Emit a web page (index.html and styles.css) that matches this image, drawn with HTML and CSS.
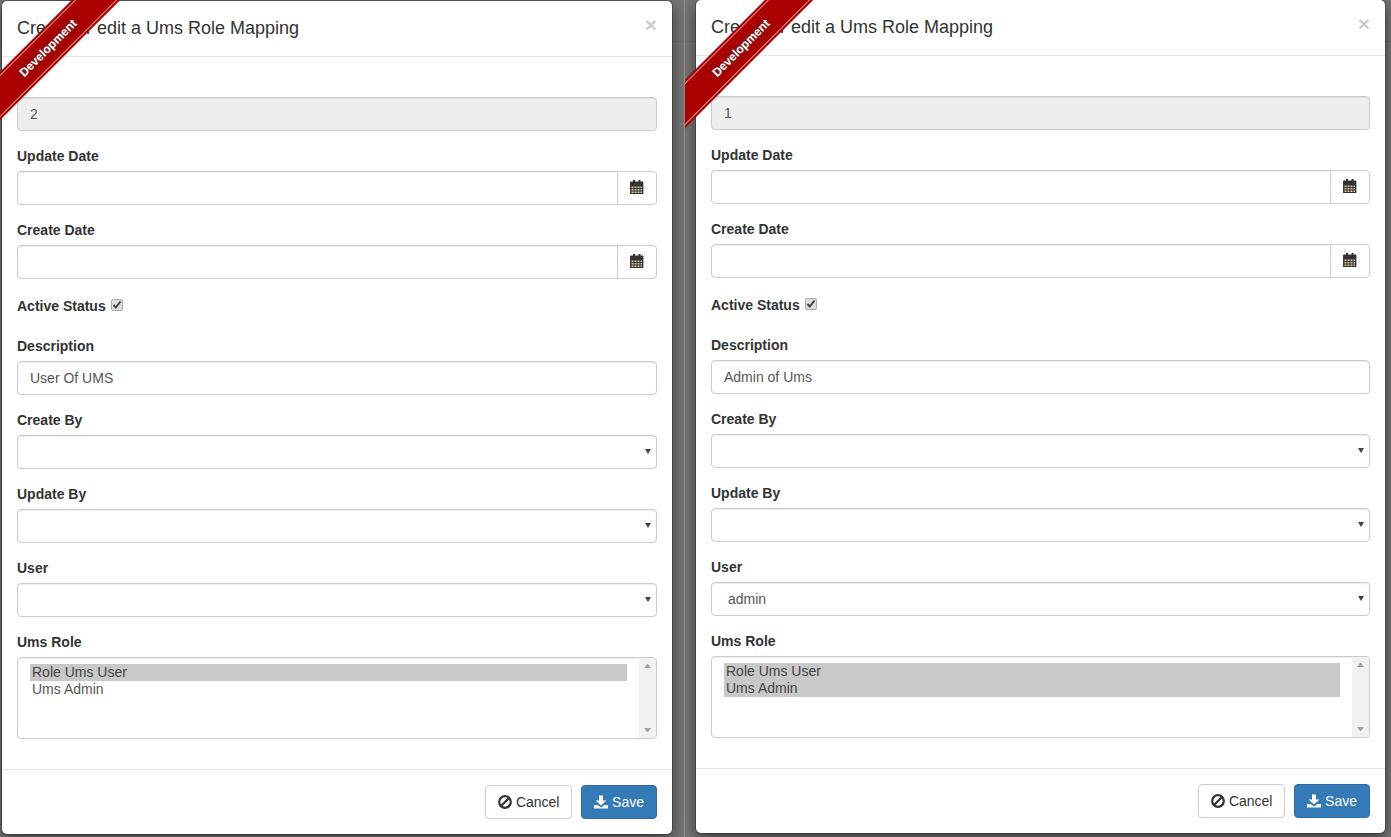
FILE: index.html
```html
<!DOCTYPE html>
<html lang="en">

<head>
    <meta charset="utf-8">
    <meta name="viewport" content="width=device-width, initial-scale=1">
    <title>Ums Role Mapping</title>
    <link rel="stylesheet" href="styles.css">
</head>

<body>
    <!-- Icons used by both windows -->
    <svg class="icon-defs" aria-hidden="true">
        <symbol id="icon-calendar" viewBox="0 0 14 14">
            <path fill="#d8cc9a" d="M1 6h12v7H1z"/>
            <path fill="#8c2b33" d="M0 2h1v12H0z"/>
            <path fill="#2a78bd" d="M12.500 2h1v12h-1z"/>
            <path d="M3 0h2v2H3zM8.500 0h2v2h-2z"/>
            <path fill-rule="evenodd" d="M.5 1.500h12.500V14H.5zM1.500 6.500v1.500h2V6.500zM4.500 6.500v1.500h2V6.500zM7.500 6.500v1.500h2V6.500zM10.500 6.500v1.500h1.500V6.500zM1.500 9v1.500h2V9zM4.500 9v1.500h2V9zM7.500 9v1.500h2V9zM10.500 9v1.500h1.500V9zM1.500 11.500V13h2v-1.500zM4.500 11.500V13h2v-1.500zM7.500 11.500V13h2v-1.500zM10.500 11.500V13h1.500v-1.500z"/>
        </symbol>
        <symbol id="icon-ban" viewBox="0 0 14 14">
            <circle cx="7" cy="7" r="5.800" fill="none" stroke="currentColor" stroke-width="2.200"/>
            <path d="M3 11l8-8" stroke="currentColor" stroke-width="2.200"/>
        </symbol>
        <symbol id="icon-save" viewBox="0 0 14 14">
            <path d="M5 .5h4v5h3.500L7 10.500 1.500 5.500H5z"/>
            <path d="M0 10h3.500L7 12.500 10.500 10H14v3.500H0z"/>
        </symbol>
    </svg>

    <!-- Left window -->
    <div class="pane pane-left">
        <div class="ribbon"><span>Development</span></div>
        <div class="modal">
            <div class="modal-header">
                <h4 class="modal-title">Create or edit a Ums Role Mapping</h4>
                <span class="close">&times;</span>
            </div>
            <form class="modal-body">
                <div class="form-group">
                    <label>ID</label>
                    <input class="form-control" type="text" value="2" disabled>
                </div>
                <div class="form-group">
                    <label>Update Date</label>
                    <div class="input-group">
                        <input class="form-control" type="text">
                        <span class="addon"><svg class="icon"><use href="#icon-calendar"/></svg></span>
                    </div>
                </div>
                <div class="form-group">
                    <label>Create Date</label>
                    <div class="input-group">
                        <input class="form-control" type="text">
                        <span class="addon"><svg class="icon"><use href="#icon-calendar"/></svg></span>
                    </div>
                </div>
                <div class="form-group check-group">
                    <label>Active Status</label>
                    <span class="checkbox"><svg viewBox="0 0 10 10"><path d="M1.500 5l2.300 2.500L8.500 1.500" fill="none" stroke="#444" stroke-width="2"/></svg></span>
                </div>
                <div class="form-group">
                    <label>Description</label>
                    <input class="form-control" type="text" value="User Of UMS">
                </div>
                <div class="form-group">
                    <label>Create By</label>
                    <div class="select-box"><select class="form-control"><option></option></select></div>
                </div>
                <div class="form-group">
                    <label>Update By</label>
                    <div class="select-box"><select class="form-control"><option></option></select></div>
                </div>
                <div class="form-group">
                    <label>User</label>
                    <div class="select-box"><select class="form-control"><option></option></select></div>
                </div>
                <div class="form-group">
                    <label>Ums Role</label>
                    <div class="list-box">
                        <select class="form-control listbox" multiple>
                            <option selected>Role Ums User</option>
                            <option>Ums Admin</option>
                        </select>
                        <div class="scrollbar"><i class="arrow-up"></i><i class="arrow-down"></i></div>
                    </div>
                </div>
            </form>
            <div class="modal-footer">
                <button class="btn" type="button"><svg class="icon"><use href="#icon-ban"/></svg>Cancel</button>
                <button class="btn btn-primary" type="button"><svg class="icon"><use href="#icon-save"/></svg>Save</button>
            </div>
        </div>
    </div>

    <!-- Right window -->
    <div class="pane pane-right">
        <div class="ribbon"><span>Development</span></div>
        <div class="modal">
            <div class="modal-header">
                <h4 class="modal-title">Create or edit a Ums Role Mapping</h4>
                <span class="close">&times;</span>
            </div>
            <form class="modal-body">
                <div class="form-group">
                    <label>ID</label>
                    <input class="form-control" type="text" value="1" disabled>
                </div>
                <div class="form-group">
                    <label>Update Date</label>
                    <div class="input-group">
                        <input class="form-control" type="text">
                        <span class="addon"><svg class="icon"><use href="#icon-calendar"/></svg></span>
                    </div>
                </div>
                <div class="form-group">
                    <label>Create Date</label>
                    <div class="input-group">
                        <input class="form-control" type="text">
                        <span class="addon"><svg class="icon"><use href="#icon-calendar"/></svg></span>
                    </div>
                </div>
                <div class="form-group check-group">
                    <label>Active Status</label>
                    <span class="checkbox"><svg viewBox="0 0 10 10"><path d="M1.500 5l2.300 2.500L8.500 1.500" fill="none" stroke="#444" stroke-width="2"/></svg></span>
                </div>
                <div class="form-group">
                    <label>Description</label>
                    <input class="form-control" type="text" value="Admin of Ums">
                </div>
                <div class="form-group">
                    <label>Create By</label>
                    <div class="select-box"><select class="form-control"><option></option></select></div>
                </div>
                <div class="form-group">
                    <label>Update By</label>
                    <div class="select-box"><select class="form-control"><option></option></select></div>
                </div>
                <div class="form-group">
                    <label>User</label>
                    <div class="select-box"><select class="form-control"><option>admin</option></select></div>
                </div>
                <div class="form-group">
                    <label>Ums Role</label>
                    <div class="list-box">
                        <select class="form-control listbox" multiple>
                            <option selected>Role Ums User</option>
                            <option selected>Ums Admin</option>
                        </select>
                        <div class="scrollbar"><i class="arrow-up"></i><i class="arrow-down"></i></div>
                    </div>
                </div>
            </form>
            <div class="modal-footer">
                <button class="btn" type="button"><svg class="icon"><use href="#icon-ban"/></svg>Cancel</button>
                <button class="btn btn-primary" type="button"><svg class="icon"><use href="#icon-save"/></svg>Save</button>
            </div>
        </div>
    </div>
</body>

</html>
```

FILE: styles.css
```css
* {
    box-sizing: border-box;
}

body {
    margin: 0;
    height: 837px;
    overflow: hidden;
    display: flex;
    background: linear-gradient(#6e6e6e, #6e6e6e) no-repeat 0 41px / 100% 1px, #777;
    font-family: "Liberation Sans", Arial, sans-serif;
    font-size: 14px;
    line-height: 20px;
    color: #333;
}

.icon-defs {
    display: none;
}

.pane {
    position: relative;
    height: 837px;
    overflow: hidden;
}

.pane-left {
    width: 684px;
    padding-left: 1px;
}

.pane-right {
    flex: 1;
    border-left: 1px solid #8c8c8c;
    padding-left: 10px;
}

.pane-right .modal {
    width: 691px;
    margin-top: -1px;
}

/* Corner ribbon, lies over the header */
.ribbon {
    position: absolute;
    top: 31px;
    left: -72px;
    width: 240px;
    height: 34px;
    padding: 2px 0;
    background: #a00;
    transform: rotate(-45deg);
    z-index: 10;
    box-shadow: 0 0 2px rgba(0, 0, 0, 0.3);
}

.pane-right .ribbon {
    left: -64px;
}

.ribbon span {
    display: block;
    height: 30px;
    border-top: 1px solid rgba(255, 255, 255, 0.55);
    border-bottom: 1px solid rgba(255, 255, 255, 0.55);
    font-size: 12px;
    font-weight: 700;
    line-height: 28px;
    text-align: center;
    color: #fff;
    text-shadow: 0 0 5px #444;
}

.modal {
    width: 672px;
    background: #fff;
    border: 1px solid rgba(0, 0, 0, 0.2);
    border-radius: 6px;
    background-clip: padding-box;
    box-shadow: 0 5px 15px rgba(0, 0, 0, 0.5);
}

.modal-header {
    display: flex;
    justify-content: space-between;
    align-items: flex-start;
    padding: 15px;
    border-bottom: 1px solid #e5e5e5;
}

.modal-title {
    margin: 0;
    font-size: 18px;
    font-weight: 500;
    line-height: 25px;
}

.close {
    margin-top: -2px;
    font-size: 21px;
    font-weight: 700;
    line-height: 21px;
    color: #000;
    opacity: 0.2;
    text-shadow: 0 1px 0 #fff;
}

.modal-body {
    display: block;
    padding: 15px;
}

.form-group {
    margin-bottom: 15px;
}

label {
    display: block;
    margin-bottom: 5px;
    font-weight: 700;
}

.form-control {
    display: block;
    width: 100%;
    height: 34px;
    padding: 6px 12px;
    font-family: inherit;
    font-size: 14px;
    line-height: 20px;
    color: #555;
    background: #fff;
    border: 1px solid #ccc;
    border-radius: 4px;
    box-shadow: inset 0 1px 1px rgba(0, 0, 0, 0.075);
}

.form-control:disabled {
    background: #eee;
    opacity: 1;
}

/* Native arrow replaced, the small triangle sits over the select */
.select-box {
    position: relative;
}

.select-box select {
    appearance: none;
    padding-left: 16px;
}

.select-box::after {
    content: "";
    position: absolute;
    top: 14px;
    right: 6.500px;
    border-top: 5px solid #444;
    border-left: 3.500px solid transparent;
    border-right: 3.500px solid transparent;
}

.list-box {
    position: relative;
}

.listbox {
    height: 82px;
    padding-right: 29px;
    overflow: hidden;
}

.listbox option:checked {
    background: linear-gradient(#c8c8c8, #c8c8c8);
    -webkit-text-fill-color: #444;
}

.scrollbar {
    position: absolute;
    top: 1px;
    right: 1px;
    bottom: 1px;
    width: 17px;
    padding: 6px 5px;
    display: flex;
    flex-direction: column;
    justify-content: space-between;
    background: #f1f1f1;
    border-radius: 0 3px 3px 0;
}

.arrow-up {
    border-bottom: 4px solid #a3a3a3;
    border-left: 3.5px solid transparent;
    border-right: 3.5px solid transparent;
}

.arrow-down {
    border-top: 4px solid #a3a3a3;
    border-left: 3.5px solid transparent;
    border-right: 3.5px solid transparent;
}

.input-group {
    display: flex;
}

.input-group .form-control {
    flex: 1;
    border-radius: 4px 0 0 4px;
}

.addon {
    display: flex;
    align-items: center;
    justify-content: center;
    width: 40px;
    margin-left: -1px;
    border: 1px solid #ccc;
    border-radius: 0 4px 4px 0;
    background: #fff;
}

.addon .icon {
    margin-bottom: 2px;
}

.icon {
    width: 14px;
    height: 14px;
    fill: currentColor;
    flex: none;
}

.check-group {
    display: flex;
    padding-top: 2px;
    height: 27px;
}

.checkbox {
    width: 12px;
    height: 12px;
    margin: 3px 0 0 5px;
    background: #ddd;
    border: 1px solid #aaa;
    border-radius: 2px;
}

.checkbox svg {
    display: block;
    width: 10px;
    height: 10px;
}

.modal-footer {
    display: flex;
    justify-content: flex-end;
    gap: 9px;
    padding: 15px;
    border-top: 1px solid #e5e5e5;
}

.btn {
    display: inline-flex;
    align-items: center;
    gap: 3.6px;
    height: 34px;
    padding: 6px 12px;
    font-family: inherit;
    font-size: 14px;
    line-height: 20px;
    color: #333;
    background: #fff;
    border: 1px solid #ccc;
    border-radius: 4px;
}

.btn-primary {
    color: #fff;
    background: #337ab7;
    border-color: #2e6da4;
}
```
